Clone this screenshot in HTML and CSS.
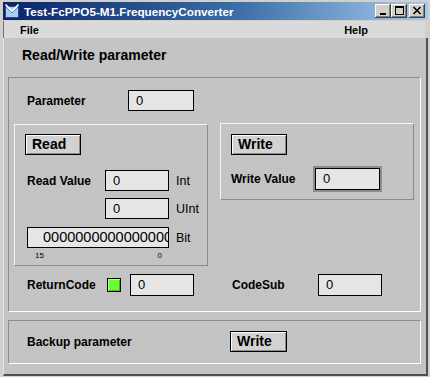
FILE: index.html
```html
<!DOCTYPE html>
<html lang="en">
<head>
  <meta charset="UTF-8">
  <title>Test-FcPPO5-M1.FrequencyConverter</title>
  <link rel="stylesheet" href="styles.css">
</head>
<body>
<div class="window">
  <!-- Title bar -->
  <div class="titlebar">
    <svg class="app-icon" width="16" height="16" viewBox="0 0 16 16">
      <rect x="1.5" y="3.5" width="13" height="11" fill="#a8cdf2" stroke="#2c4a80"/>
      <path d="M1.5 1.5 L8 8 L14.5 1.5" fill="none" stroke="#ffffff" stroke-width="1.6"/>
      <path d="M2 4 L8 10 L14 4" fill="none" stroke="#5a86c0" stroke-width="1"/>
    </svg>
    <span class="title">Test-FcPPO5-M1.FrequencyConverter</span>
    <div class="win-buttons">
      <span class="win-btn">
        <svg width="14" height="12" viewBox="0 0 14 12"><rect x="4" y="8" width="6" height="2" fill="#000"/></svg>
      </span>
      <span class="win-btn">
        <svg width="14" height="12" viewBox="0 0 14 12"><rect x="3.5" y="1.5" width="8" height="8" fill="none" stroke="#000"/><rect x="3" y="1" width="9" height="2" fill="#000"/></svg>
      </span>
      <span class="win-btn close">
        <svg width="14" height="12" viewBox="0 0 14 12"><path d="M3.5 2 L10.5 9 M10.5 2 L3.5 9" stroke="#000" stroke-width="1.6"/></svg>
      </span>
    </div>
  </div>

  <!-- Menu bar -->
  <div class="menubar">
    <span>File</span>
    <span>Help</span>
  </div>

  <div class="client">
    <h1>Read/Write parameter</h1>

    <div class="panel main-panel">
      <div class="param-row">
        <span class="label param-label">Parameter</span>
        <div class="field">0</div>
      </div>

      <div class="groups">
        <!-- Read group -->
        <div class="group read-group">
          <button class="btn">Read</button>
          <div class="value-row first">
            <span class="label value-label">Read Value</span>
            <div class="field small">0</div>
            <span class="unit">Int</span>
          </div>
          <div class="value-row">
            <span class="value-label"></span>
            <div class="field small">0</div>
            <span class="unit">UInt</span>
          </div>
          <div class="value-row bit-row">
            <div class="field bits">0000000000000000</div>
            <span class="unit">Bit</span>
          </div>
          <div class="bit-scale">
            <span>15</span>
            <span>0</span>
          </div>
        </div>

        <!-- Write group -->
        <div class="group write-group">
          <button class="btn">Write</button>
          <div class="value-row write-row">
            <span class="label write-label">Write Value</span>
            <div class="field small focused">0</div>
          </div>
        </div>
      </div>

      <div class="return-row">
        <span class="label rc-label">ReturnCode</span>
        <span class="led"></span>
        <div class="field small tall">0</div>
        <span class="label sub-label">CodeSub</span>
        <div class="field small tall">0</div>
      </div>
    </div>

    <div class="panel backup-panel">
      <span class="label backup-label">Backup parameter</span>
      <button class="btn backup-btn">Write</button>
    </div>
  </div>
</div>
</body>
</html>
```

FILE: styles.css
```css
/* Window frame */
body {
  margin: 0;
  width: 430px;
  height: 377px;
  overflow: hidden;
  background: #d4d0c8;
  font-family: "Liberation Sans", Arial, sans-serif;
}
.window {
  box-sizing: border-box;
  width: 430px;
  height: 377px;
  padding: 2px 2px 1px 3px;
  display: flex;
  flex-direction: column;
}
.titlebar {
  height: 18px;
  display: flex;
  align-items: center;
  background: linear-gradient(90deg, #0a246a 0%, #3a6ea5 55%, #a6caf0 100%);
}
.app-icon {
  margin-left: 1px;
}
.title {
  margin-left: 4px;
  color: #fff;
  font-weight: bold;
  font-size: 11.7px;
  white-space: nowrap;
}
.win-buttons {
  margin-left: auto;
  margin-right: 3px;
  display: flex;
}
.win-btn {
  width: 16px;
  height: 14px;
  display: flex;
  align-items: center;
  justify-content: center;
  background: #d4d0c8;
  box-shadow: inset -1px -1px #404040, inset 1px 1px #fff, inset -2px -2px #808080;
}
.win-btn.close {
  margin-left: 2px;
}

/* Menu bar */
.menubar {
  margin-top: 1px;
  height: 17px;
  display: flex;
  justify-content: space-between;
  align-items: center;
  padding: 0 57px 0 16px;
  border-left: 1px solid #707070;
  margin-right: 3px;
  background: #dadada;
  background-image: repeating-conic-gradient(#d6d6d6 0 25%, #dedede 0 50%);
  background-size: 2px 2px;
  font-size: 11px;
  font-weight: bold;
  color: #000;
}

/* Client area */
.client {
  flex: 1;
  padding: 8px 5px 10px 4px;
  border-left: 1px solid #e4e4e4;
  border-right: 2px solid #505050;
  border-bottom: 2px solid #505050;
  background: #c4c4c4;
  background-image: repeating-conic-gradient(#bfbfbf 0 25%, #c8c8c8 0 50%);
  background-size: 2px 2px;
}
h1 {
  margin: 0 0 13px 14px;
  height: 18px;
  line-height: 18px;
  font-size: 14px;
  font-weight: bold;
}
.panel {
  border: 1px solid;
  border-color: #8c8c8c #fff #fff #8c8c8c;
}
.main-panel {
  padding: 12px 6px 15px 5px;
}
.label {
  font-size: 12px;
  font-weight: bold;
  color: #000;
}

/* Fields */
.field {
  box-sizing: border-box;
  height: 21px;
  width: 66px;
  border: 1px solid #000;
  padding-left: 7px;
  line-height: 19px;
  font-size: 13px;
  background: #e6e6e6;
  background-image: repeating-conic-gradient(#e2e2e2 0 25%, #eaeaea 0 50%);
  background-size: 2px 2px;
  white-space: nowrap;
  overflow: hidden;
}
.field.small {
  width: 64px;
}
.field.tall {
  height: 22px;
  line-height: 20px;
}
.field.focused {
  height: 22px;
  line-height: 20px;
  margin: 2px;
  width: 65px;
  box-shadow: 0 0 0 2px #8c8c8c;
}
.field.bits {
  width: 142px;
  padding-left: 15px;
  font-size: 14.5px;
}

/* Buttons */
.btn {
  box-sizing: border-box;
  width: 56px;
  height: 21px;
  padding: 0 0 0 6px;
  text-align: left;
  border: 1px solid #000;
  background: #d2d2d2;
  box-shadow: inset 1px 1px #fff, inset -1px -1px #8c8c8c;
  font-family: "Liberation Sans", Arial, sans-serif;
  font-size: 14px;
  font-weight: bold;
  color: #000;
  line-height: 19px;
}

/* Parameter row */
.param-row {
  display: flex;
  align-items: center;
  height: 21px;
  padding-left: 13px;
}
.param-label {
  width: 101px;
}

/* Read / Write groups */
.groups {
  margin-top: 12px;
  display: grid;
  grid-template-columns: 194px 194px;
  column-gap: 12px;
  align-items: start;
}
.group {
  box-sizing: border-box;
  border: 1px solid;
  border-color: #f4f4f4 #8c8c8c #8c8c8c #f4f4f4;
  padding: 9px 0 0 10px;
}
.read-group {
  margin-top: 1px;
  height: 142px;
}
.write-group {
  height: 77px;
  padding-top: 10px;
}
.value-row {
  display: flex;
  align-items: center;
  margin-top: 7px;
  padding-left: 2px;
}
.value-row.first {
  margin-top: 15px;
}
.value-row.bit-row {
  margin-top: 8px;
}
.value-label {
  width: 78px;
}
.unit {
  margin-left: 7px;
  font-size: 12.5px;
}
.bit-scale {
  width: 142px;
  margin-left: 2px;
  display: flex;
  justify-content: space-between;
  box-sizing: border-box;
  padding: 3px 7px 0 8px;
  font-size: 8px;
}
.write-row {
  margin-top: 11px;
  padding-left: 0;
}
.write-label {
  width: 82px;
}

/* Return code row */
.return-row {
  margin-top: 8px;
  display: flex;
  align-items: center;
  height: 22px;
  padding-left: 13px;
}
.rc-label {
  width: 80px;
}
.led {
  box-sizing: border-box;
  width: 14px;
  height: 14px;
  margin-right: 9px;
  border: 1px solid #000;
  background: #66ff33;
  box-shadow: inset 1px 1px #b4ff90, inset -1px -1px #3cb818;
}
.sub-label {
  margin-left: 38px;
  width: 86px;
}

/* Backup panel */
.backup-panel {
  margin-top: 8px;
  display: flex;
  align-items: center;
  padding: 10px 0 11px 18px;
}
.backup-label {
  width: 203px;
}
.backup-btn {
  width: 57px;
}
```
